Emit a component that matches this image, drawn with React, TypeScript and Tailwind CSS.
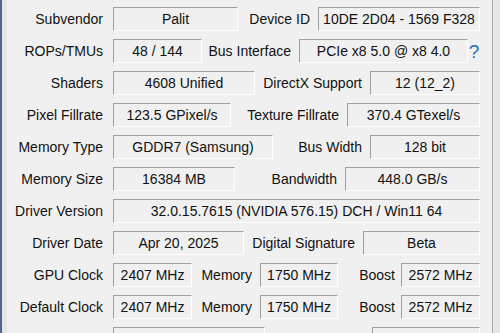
import React from 'react';

// sunken "static edge" value field
const Field: React.FC<{ className: string; children?: React.ReactNode }> = ({ className, children }) => (
  <div
    className={`h-[24px] shrink-0 flex items-center justify-center border border-t-[#a0a0a0] border-l-[#a0a0a0] border-b-white border-r-white bg-[#f0f0f0] whitespace-nowrap ${className}`}
  >
    {children}
  </div>
);

const Label: React.FC<{ className?: string; children?: React.ReactNode }> = ({ className = '', children }) => (
  <div className={`text-right whitespace-nowrap ${className}`}>{children}</div>
);

const Row: React.FC<{ children: React.ReactNode; className?: string }> = ({ children, className = '' }) => (
  <div className={`flex items-center h-[32px] ${className}`}>{children}</div>
);

const App: React.FC = () => {
  return (
    <div className="w-[500px] h-[333px] overflow-hidden flex bg-[#f0f0f0] text-[14px] text-[#111] font-['Liberation_Sans',Arial,sans-serif]">
      {/* window frame, left side */}
      <div className="w-[2px] bg-[#55618f]" />
      <div className="w-[5px] bg-[#e4e4e8]" />

      <div className="w-[485px] pt-[3px] pr-[12px]">
        <Row>
          <Label className="w-[96px] mr-[10px]">Subvendor</Label>
          <Field className="w-[125px]">Palit</Field>
          <Label className="flex-1 pr-[8px]">Device ID</Label>
          <Field className="w-[162px]">10DE 2D04 - 1569 F328</Field>
        </Row>

        <Row>
          <Label className="w-[96px] mr-[10px]">ROPs/TMUs</Label>
          <Field className="w-[89px]">48 / 144</Field>
          <Label className="flex-1 pr-[8px]">Bus Interface</Label>
          <Field className="w-[169px]">PCIe x8 5.0 @ x8 4.0</Field>
          <div className="w-[12px] text-center text-[19px] leading-none text-[#1c6dc4]">?</div>
        </Row>

        <Row>
          <Label className="w-[96px] mr-[10px]">Shaders</Label>
          <Field className="w-[142px]">4608 Unified</Field>
          <Label className="flex-1 pr-[8px]">DirectX Support</Label>
          <Field className="w-[110px]">12 (12_2)</Field>
        </Row>

        <Row>
          <Label className="w-[96px] mr-[10px]">Pixel Fillrate</Label>
          <Field className="w-[118px]">123.5 GPixel/s</Field>
          <Label className="flex-1 pr-[8px]">Texture Fillrate</Label>
          <Field className="w-[133px]">370.4 GTexel/s</Field>
        </Row>

        <Row>
          <Label className="w-[96px] mr-[10px]">Memory Type</Label>
          <Field className="w-[160px]">GDDR7 (Samsung)</Field>
          <Label className="flex-1 pr-[8px]">Bus Width</Label>
          <Field className="w-[110px]">128 bit</Field>
        </Row>

        <Row>
          <Label className="w-[96px] mr-[10px]">Memory Size</Label>
          <Field className="w-[122px]">16384 MB</Field>
          <Label className="flex-1 pr-[8px]">Bandwidth</Label>
          <Field className="w-[135px]">448.0 GB/s</Field>
        </Row>

        <Row>
          <Label className="w-[96px] mr-[10px]">Driver Version</Label>
          <Field className="flex-1">32.0.15.7615 (NVIDIA 576.15) DCH / Win11 64</Field>
        </Row>

        <Row>
          <Label className="w-[96px] mr-[10px]">Driver Date</Label>
          <Field className="w-[131px]">Apr 20, 2025</Field>
          <Label className="flex-1 pr-[8px]">Digital Signature</Label>
          <Field className="w-[117px]">Beta</Field>
        </Row>

        <Row>
          <Label className="w-[96px] mr-[10px]">GPU Clock</Label>
          <Field className="w-[79px]">2407 MHz</Field>
          <Label className="flex-1 pr-[8px]">Memory</Label>
          <Field className="w-[78px]">1750 MHz</Field>
          <Label className="w-[63px] pr-[6px]">Boost</Label>
          <Field className="w-[79px]">2572 MHz</Field>
        </Row>

        <Row>
          <Label className="w-[96px] mr-[10px]">Default Clock</Label>
          <Field className="w-[79px]">2407 MHz</Field>
          <Label className="flex-1 pr-[8px]">Memory</Label>
          <Field className="w-[78px]">1750 MHz</Field>
          <Label className="w-[63px] pr-[6px]">Boost</Label>
          <Field className="w-[79px]">2572 MHz</Field>
        </Row>

        {/* next row, only the top edge of its fields is in view */}
        <Row>
          <Label className="w-[96px] mr-[10px]" />
          <Field className="w-[152px]" />
          <Label className="flex-1 pr-[8px]" />
          <Field className="w-[108px]" />
        </Row>
      </div>

      {/* window frame, right side */}
      <div className="w-[1px] bg-[#a9a9a9]" />
      <div className="flex-1 bg-[#e6e6e6]" />
    </div>
  );
};

export default App;
